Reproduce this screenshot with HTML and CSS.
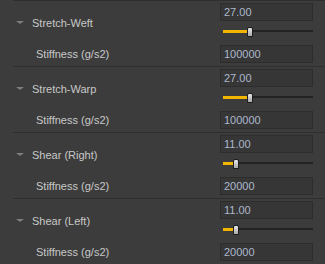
FILE: index.html
```html
<!DOCTYPE html>
<html lang="en">
<head>
  <meta charset="UTF-8">
  <title>Fabric Properties</title>
  <link rel="stylesheet" href="styles.css">
</head>
<body>
  <div class="panel">
    <div class="group">
      <div class="param">
        <div class="label"><span class="arrow"></span>Stretch-Weft</div>
        <div class="ctl">
          <div class="field">27.00</div>
          <div class="slider"><div class="fill" style="width:24px"></div><div class="thumb"></div><div class="track"></div></div>
        </div>
      </div>
      <div class="sub">
        <div class="label">Stiffness (g/s2)</div>
        <div class="field">100000</div>
      </div>
    </div>

    <div class="group">
      <div class="param">
        <div class="label"><span class="arrow"></span>Stretch-Warp</div>
        <div class="ctl">
          <div class="field">27.00</div>
          <div class="slider"><div class="fill" style="width:24px"></div><div class="thumb"></div><div class="track"></div></div>
        </div>
      </div>
      <div class="sub">
        <div class="label">Stiffness (g/s2)</div>
        <div class="field">100000</div>
      </div>
    </div>

    <div class="group">
      <div class="param">
        <div class="label"><span class="arrow"></span>Shear (Right)</div>
        <div class="ctl">
          <div class="field">11.00</div>
          <div class="slider"><div class="fill" style="width:10px"></div><div class="thumb"></div><div class="track"></div></div>
        </div>
      </div>
      <div class="sub">
        <div class="label">Stiffness (g/s2)</div>
        <div class="field">20000</div>
      </div>
    </div>

    <div class="group">
      <div class="param">
        <div class="label"><span class="arrow"></span>Shear (Left)</div>
        <div class="ctl">
          <div class="field">11.00</div>
          <div class="slider"><div class="fill" style="width:10px"></div><div class="thumb"></div><div class="track"></div></div>
        </div>
      </div>
      <div class="sub">
        <div class="label">Stiffness (g/s2)</div>
        <div class="field">20000</div>
      </div>
    </div>
  </div>
</body>
</html>
```

FILE: styles.css
```css
html, body {
  margin: 0;
  background: #3c3c3c;
}
.panel {
  font-family: 'Liberation Sans', Arial, sans-serif;
  font-size: 11px;
  color: #c8c8c8;
}
.group {
  border-top: 1px solid #2f2f2f;
  margin-left: 13px;
  height: 65px;
}
.param {
  display: flex;
  height: 42px;
}
.param .label {
  display: flex;
  align-items: center;
  width: 207px;
  padding-top: 1px;
}
.arrow {
  width: 0;
  height: 0;
  margin: 0 8px 0 3px;
  border-left: 4px solid transparent;
  border-right: 4px solid transparent;
  border-top: 3px solid #7e7e7e;
}
.ctl {
  display: flex;
  flex-direction: column;
  padding-top: 2px;
}
.field {
  box-sizing: border-box;
  width: 93px;
  height: 18px;
  line-height: 16px;
  padding: 0 3px;
  background: #363636;
  border: 1px solid #2d2d2d;
  color: #adb8cc;
}
.slider {
  display: flex;
  align-items: center;
  height: 16px;
  margin: 2px 0 0 3px;
  width: 90px;
}
.fill {
  height: 3px;
  background: #f2b600;
}
.thumb {
  box-sizing: border-box;
  width: 6px;
  height: 10px;
  margin-top: 2px;
  background: linear-gradient(#e6e6e6, #a9a9a9);
  border: 1px solid #1e1e1e;
  border-radius: 2px 2px 0 0;
}
.track {
  flex: 1;
  height: 2px;
  background: #232323;
}
.sub {
  display: flex;
  align-items: center;
  height: 22px;
}
.sub .label {
  width: 207px;
  padding-left: 23px;
  box-sizing: border-box;
}
```
